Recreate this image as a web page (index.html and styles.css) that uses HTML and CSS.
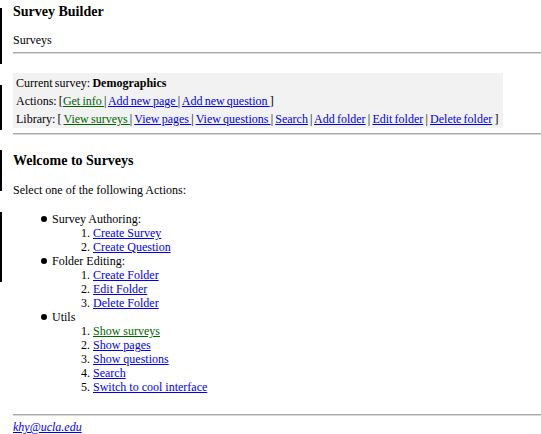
FILE: index.html
```html
<!DOCTYPE html>
<html lang="en">
<head>
    <meta charset="UTF-8">
    <title>Survey Builder</title>
    <link rel="stylesheet" href="styles.css">
</head>
<body>
    <div class="header mark mark-1">
        <h1 class="title">Survey Builder</h1>
        <p class="crumb">Surveys</p>
    </div>
    <hr class="rule">

    <div class="survey-box mark mark-2">
        <div class="box-line">Current survey: <b>Demographics</b></div>
        <div class="box-line">Actions: [<a class="current" href="#">Get info </a> | <a href="#">Add new page </a> | <a href="#">Add new question </a>]</div>
        <div class="box-line">Library: [ <a class="current" href="#">View surveys </a> | <a href="#">View pages </a>| <a href="#">View questions </a> | <a href="#">Search</a> | <a href="#">Add folder</a> | <a href="#">Edit folder</a> | <a href="#">Delete folder</a> ]</div>
    </div>
    <hr class="rule box-rule">

    <div class="intro mark mark-3">
        <h2 class="heading">Welcome to Surveys</h2>
        <p class="lead">Select one of the following Actions:</p>
    </div>

    <ul class="actions mark mark-4">
        <li>Survey Authoring:
            <ol>
                <li><a href="#">Create Survey</a></li>
                <li><a href="#">Create Question</a></li>
            </ol>
        </li>
        <li>Folder Editing:
            <ol>
                <li><a href="#">Create Folder</a></li>
                <li><a href="#">Edit Folder</a></li>
                <li><a href="#">Delete Folder</a></li>
            </ol>
        </li>
        <li>Utils
            <ol>
                <li><a class="current" href="#">Show surveys</a></li>
                <li><a href="#">Show pages</a></li>
                <li><a href="#">Show questions</a></li>
                <li><a href="#">Search </a></li>
                <li><a href="#">Switch to cool interface</a></li>
            </ol>
        </li>
    </ul>

    <hr class="rule footer-rule">
    <address class="footer"><a href="#">khy@ucla.edu</a></address>
</body>
</html>
```

FILE: styles.css
```css
* {
    box-sizing: border-box;
}

html, body {
    overflow: hidden;
}

body {
    margin: 0;
    padding: 0 0 0 13px;
    font-family: "Liberation Serif", "Times New Roman", serif;
    font-size: 12px;
    line-height: 14px;
    color: #000;
    background: #fff;
}

a {
    color: #0000ee;
}

a.current {
    color: #006400;
}

/* black marks along the left edge */
.mark {
    position: relative;
}

.mark::before {
    content: "";
    position: absolute;
    left: -13px;
    width: 2px;
    background: #000;
}

.mark-1::before { top: 8px; height: 56px; }
.mark-2::before { top: 12px; height: 45px; }
.mark-3::before { top: 15px; height: 41px; }
.mark-4::before { top: 0; height: 70px; }

.header {
    padding-top: 4px;
}

.title {
    margin: 0;
    font-size: 14px;
    line-height: 16px;
    font-weight: bold;
}

.crumb {
    margin: 13px 0 0;
}

.rule {
    margin: 5px 0 0;
    height: 2px;
    border: 0;
    border-top: 1px solid #a8a8a8;
    border-bottom: 1px solid #d8d8d8;
}

.survey-box {
    margin: 19px 38px 0 0;
    padding: 1px 3px 0;
    background: #f2f2f2;
}

.box-line {
    line-height: 18px;
    white-space: nowrap;
    word-spacing: -0.8px;
}

.intro {
    padding-top: 18px;
}

.heading {
    margin: 0;
    font-size: 14px;
    line-height: 16px;
    font-weight: bold;
}

.lead {
    margin: 14px 0 0;
}

.actions {
    margin: 15px 0 0;
    padding-left: 39px;
    list-style: none;
}

.actions > li::before {
    content: "";
    display: inline-block;
    width: 6px;
    height: 6px;
    margin: 0 5px 0 -11px;
    border-radius: 50%;
    background: #000;
    vertical-align: 1px;
}

.actions ol {
    margin: 0;
    padding-left: 41px;
}

.footer-rule {
    margin-top: 20px;
}

.footer {
    margin-top: 4px;
    font-style: italic;
}
```
